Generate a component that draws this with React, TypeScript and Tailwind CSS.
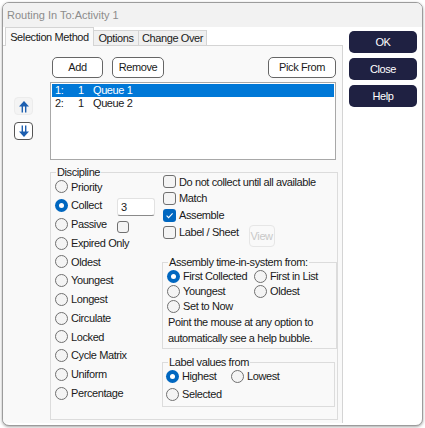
import React from 'react'

const panelBg = 'bg-[#f9f9f9]'

function Radio({ checked }: { checked?: boolean }) {
    return checked ? (
        <span className="flex h-[13px] w-[13px] shrink-0 items-center justify-center rounded-full bg-[#0067c0]">
            <span className="h-[5px] w-[5px] rounded-full bg-white" />
        </span>
    ) : (
        <span className="h-[13px] w-[13px] shrink-0 rounded-full border border-[#707070] bg-[#f4f4f4]" />
    )
}

function Check({ checked }: { checked?: boolean }) {
    return checked ? (
        <span className="flex h-[13px] w-[13px] shrink-0 items-center justify-center rounded-[3px] bg-[#0067c0]">
            <svg width="9" height="9" viewBox="0 0 9 9">
                <path d="M1.6 4.7 L3.6 6.7 L7.6 2.4" fill="none" stroke="white" strokeWidth="1.1" />
            </svg>
        </span>
    ) : (
        <span className="h-[13px] w-[13px] shrink-0 rounded-[3px] border border-[#707070] bg-[#f4f4f4]" />
    )
}

function RadioRow({ label, checked, className = '' }: { label: string; checked?: boolean; className?: string }) {
    return (
        <div className={`flex items-center gap-[3px] ${className}`}>
            <Radio checked={checked} />
            <span>{label}</span>
        </div>
    )
}

function Group({ label, className, children }: { label: string; className: string; children: React.ReactNode }) {
    return (
        <div className={`relative border border-[#dcdcdc] ${panelBg} ${className}`}>
            <span className={`absolute -top-[7px] left-[5px] px-[1px] leading-[13px] ${panelBg}`}>{label}</span>
            {children}
        </div>
    )
}

function Btn({ label, className }: { label: string; className: string }) {
    return (
        <button className={`flex h-[21px] items-center justify-center rounded-[5px] border border-[#666] bg-white ${className}`}>
            {label}
        </button>
    )
}

function DarkBtn({ label }: { label: string }) {
    return (
        <button className="flex h-[22px] w-[68px] items-center justify-center rounded-[5px] bg-[#1f2142] text-white">
            {label}
        </button>
    )
}

function Arrow({ down }: { down?: boolean }) {
    return (
        <svg width="12" height="13" viewBox="0 0 12 13" className={down ? 'rotate-180' : ''}>
            <path d="M6 1 L11 6.5 H1 Z" fill="#1d5fb0" />
            <path d="M4.3 6 V12.5 M7.7 6 V12.5" stroke="#1d5fb0" strokeWidth="1.4" />
        </svg>
    )
}

export default function App() {
    const discipline = [
        'Expired Only',
        'Oldest',
        'Youngest',
        'Longest',
        'Circulate',
        'Locked',
        'Cycle Matrix',
        'Uniform',
        'Percentage',
    ]

    return (
        <div className="h-[428px] w-[425px] bg-white p-[2px] font-['Liberation_Sans',Arial,sans-serif] text-[11px] tracking-[-0.4px] text-[#1a1a1a]">
            <div className="flex h-[424px] w-[421px] flex-col overflow-hidden rounded-[7px] border border-[#9c9c9c] bg-white shadow-[0_1px_3px_rgba(0,0,0,0.35)]">
                {/* Title */}
                <div className="flex h-[24px] shrink-0 items-center bg-[#f2f2f2] pl-[4px] text-[11px] tracking-normal text-[#8c8c8c]">
                    Routing In To:Activity 1
                </div>

                <div className="flex flex-1">
                    {/* Tab control */}
                    <div className="flex w-[340px] flex-col">
                        <div className="flex h-[18px] items-end pl-[2px]">
                            <div className={`flex h-[19px] w-[89px] items-center justify-center border border-b-0 border-[#d4d4d4] ${panelBg} relative top-[1px]`}>
                                Selection Method
                            </div>
                            <div className="flex h-[15px] w-[45px] items-center justify-center border border-b-0 border-l-0 border-[#d4d4d4] bg-[#f0f0f0]">
                                Options
                            </div>
                            <div className="flex h-[15px] w-[68px] items-center justify-center border border-b-0 border-l-0 border-[#d4d4d4] bg-[#f0f0f0]">
                                Change Over
                            </div>
                        </div>

                        <div className={`flex flex-1 border-t border-r border-[#d4d4d4] ${panelBg} mb-[2px]`}>
                            {/* Up / down */}
                            <div className="flex w-[47px] flex-col items-center pt-[51px] pr-[6px]">
                                <div className="flex h-[18px] w-[19px] items-center justify-center rounded-[4px] border border-[#ececec] bg-[#f4f4f4]">
                                    <Arrow />
                                </div>
                                <div className="mt-[7px] flex h-[18px] w-[19px] items-center justify-center rounded-[4px] border border-[#555] bg-white">
                                    <Arrow down />
                                </div>
                            </div>

                            <div className="flex w-[288px] flex-col pt-[11px]">
                                <div className="flex">
                                    <Btn label="Add" className="ml-[2px] w-[51px]" />
                                    <Btn label="Remove" className="ml-[9px] w-[52px]" />
                                    <Btn label="Pick From" className="ml-auto mr-[2px] w-[68px]" />
                                </div>

                                {/* List */}
                                <div className="mt-[4px] h-[78px] w-[286px] border border-[#a8a8a8] bg-white p-[1px]">
                                    <div className="flex h-[13px] items-center bg-[#0078d7] text-white">
                                        <span className="w-[26px] pl-[3px]">1:</span>
                                        <span className="w-[15px]">1</span>
                                        <span>Queue 1</span>
                                    </div>
                                    <div className="flex h-[13px] items-center">
                                        <span className="w-[26px] pl-[3px]">2:</span>
                                        <span className="w-[15px]">1</span>
                                        <span>Queue 2</span>
                                    </div>
                                </div>

                                {/* Discipline */}
                                <Group label="Discipline" className="mt-[12px] flex h-[248px] w-[288px]">
                                    <div className="flex w-[111px] flex-col pt-[4.5px] pl-[4px]">
                                        <RadioRow label="Priority" className="h-[18.75px]" />
                                        <div className="flex h-[18.75px] items-center">
                                            <div className="flex w-[62px] items-center gap-[3px]">
                                                <Radio checked />
                                                <span>Collect</span>
                                            </div>
                                            <div className="mt-[3px] flex h-[18px] w-[38px] items-center rounded-[3px] border border-[#e2e2e2] border-b-[#8a8a8a] bg-white pl-[3px]">
                                                3
                                            </div>
                                        </div>
                                        <div className="flex h-[18.75px] items-center">
                                            <div className="flex w-[62px] items-center gap-[3px]">
                                                <Radio />
                                                <span>Passive</span>
                                            </div>
                                            <span className="mt-[5px] h-[12px] w-[12px] rounded-[3px] border border-[#707070] bg-[#f4f4f4]" />
                                        </div>
                                        {discipline.map((d) => (
                                            <RadioRow key={d} label={d} className="h-[18.75px]" />
                                        ))}
                                    </div>

                                    <div className="flex w-[175px] flex-col pt-[0.6px]">
                                        <div className="flex h-[16.7px] items-center gap-[3px] pl-[1px]">
                                            <Check />
                                            <span>Do not collect until all available</span>
                                        </div>
                                        <div className="flex h-[16.7px] items-center gap-[3px] pl-[1px]">
                                            <Check />
                                            <span>Match</span>
                                        </div>
                                        <div className="flex h-[16.7px] items-center gap-[3px] pl-[1px]">
                                            <Check checked />
                                            <span>Assemble</span>
                                        </div>
                                        <div className="flex h-[16.7px] items-start pl-[1px]">
                                            <div className="flex h-[16.7px] items-center gap-[3px]">
                                                <Check />
                                                <span>Label / Sheet</span>
                                            </div>
                                            <span className="ml-[10px] mt-[1.5px] flex h-[22px] w-[26px] shrink-0 items-center justify-center rounded-[4px] border border-[#e6e6e6] text-[#c8c8c8]">
                                                View
                                            </span>
                                        </div>

                                        <Group label="Assembly time-in-system from:" className="mt-[22px] w-[175px] pt-[5.5px] pb-[2px] pl-[4px]">
                                            <div className="flex">
                                                <RadioRow label="First Collected" checked className="h-[15px] w-[87px]" />
                                                <RadioRow label="First in List" className="h-[15px]" />
                                            </div>
                                            <div className="flex">
                                                <RadioRow label="Youngest" className="h-[15px] w-[87px]" />
                                                <RadioRow label="Oldest" className="h-[15px]" />
                                            </div>
                                            <RadioRow label="Set to Now" className="h-[15px]" />
                                            <p className="mt-[0.5px] pl-[1px] leading-[16px]">
                                                Point the mouse at any option to
                                                <br />
                                                automatically see a help bubble.
                                            </p>
                                        </Group>

                                        <Group label="Label values from" className="mt-[13px] w-[173px] pt-[4px] pb-[3px] pl-[3px]">
                                            <div className="flex">
                                                <RadioRow label="Highest" checked className="h-[18px] w-[65px]" />
                                                <RadioRow label="Lowest" className="h-[18px]" />
                                            </div>
                                            <RadioRow label="Selected" className="h-[18px]" />
                                        </Group>
                                    </div>
                                </Group>
                            </div>
                        </div>
                    </div>

                    {/* Right buttons */}
                    <div className="flex flex-col gap-[5px] pt-[4px] pl-[6px]">
                        <DarkBtn label="OK" />
                        <DarkBtn label="Close" />
                        <DarkBtn label="Help" />
                    </div>
                </div>
            </div>
        </div>
    )
}
